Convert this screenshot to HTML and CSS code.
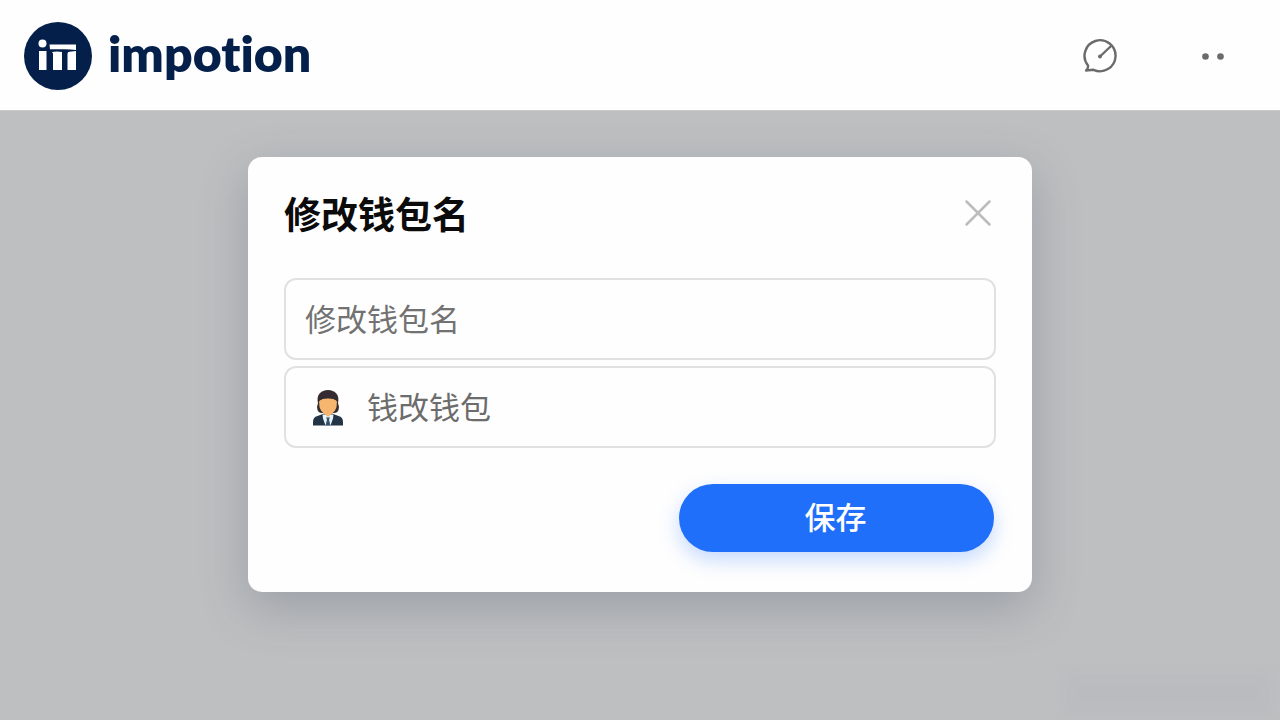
FILE: index.html
```html
<!DOCTYPE html>
<html lang="zh-CN">
<head>
<meta charset="utf-8">
<meta name="viewport" content="width=device-width, initial-scale=1">
<title>impotion</title>
<link rel="stylesheet" href="styles.css">
</head>
<body>
<header class="topbar">
  <a class="brand" href="#">
    <svg class="brand-mark" viewBox="0 0 68 68" aria-hidden="true">
      <circle cx="34" cy="34" r="34" fill="#04204a"/>
      <g fill="#fff">
        <circle cx="18.500" cy="21.500" r="4"/>
        <path d="M15 29h7.500v19H15z"/>
        <path d="M25.500 22.500H52V28q-5-.800-11-.800H26z"/>
        <path d="M28 30q5-1 10 0v18h-9V31.500zM43.500 31.500q0-1.500 2-1.700l6.500-.8v19h-8.500z"/>
      </g>
    </svg>
    <span class="brand-name">impotion</span>
  </a>
  <nav class="actions">
    <button class="icon-button" type="button" aria-label="消息">
      <svg width="36" height="36" viewBox="0 0 36 36" fill="none" stroke="#6b6b6b" stroke-width="2.400" stroke-linecap="round" stroke-linejoin="round" aria-hidden="true">
        <path d="M5 27.500A15.500 15.500 0 1 1 10.500 31.800L3 32.500Q5.500 30.500 5 27.500z"/>
        <path d="M17 18.500 27.500 8.500"/>
        <circle cx="17" cy="18.500" r="1.200" fill="#6b6b6b" stroke-width="1.500"/>
      </svg>
    </button>
    <button class="icon-button" type="button" aria-label="更多">
      <svg width="36" height="36" viewBox="0 0 36 36" fill="#6b6b6b" aria-hidden="true">
        <circle cx="10.500" cy="18.500" r="3.300"/><circle cx="25.500" cy="18.500" r="3.300"/>
      </svg>
    </button>
  </nav>
</header>
<main class="backdrop">
  <form class="dialog" role="dialog" aria-labelledby="dialog-title">
    <div class="dialog-head">
      <h1 class="dialog-title" id="dialog-title">修改钱包名</h1>
      <button class="close" type="button" aria-label="关闭">
        <svg width="28" height="28" viewBox="0 0 28 28" fill="none" stroke="#bcbcbc" stroke-width="2.500" stroke-linecap="round" aria-hidden="true"><path d="m2.500 2.500 23 23M25.500 2.500l-23 23"/></svg>
      </button>
    </div>
    <div class="fields">
      <label class="field">
        <input class="field-input" type="text" placeholder="修改钱包名" aria-label="修改钱包名">
      </label>
      <label class="field field-with-icon">
        <svg class="avatar" viewBox="0 0 32 38" aria-hidden="true">
          <path d="M6 15C4 7 9 2 16 2s12 5 10 13q1.500 3.500.500 7-1 3-4.500 3H10q-3.500 0-4.500-3-1-3.500.500-7z" fill="#352b30"/>
          <path d="M1 37.500V34q0-5 4.500-6L12 25.500h8l6.500 2.500q4.500 1 4.500 6v3.500z" fill="#233447"/>
          <path d="M10.500 26.500h11l-.5 4-2.500 7h-5L11 30.500z" fill="#eaf4fb"/>
          <path d="m14 29.500h4l-1 2 1.500 6h-5l1.500-6z" fill="#36536f"/>
          <path d="M7 12.500q9-4.500 18 0l-.5 6.500q-1.500 5-5.500 7.500l-3 2.500-3-2.500Q9 24 7.500 19z" fill="#f6b66f"/>
          <path d="M6 15Q5.500 5 16 5t10 10q-2-4-6-4.500-4-.5-8 0-4 .5-6 4.500z" fill="#352b30"/>
        </svg>
        <input class="field-input" type="text" value="钱改钱包" aria-label="钱包">
      </label>
    </div>
    <div class="dialog-foot">
      <button class="save" type="submit">保存</button>
    </div>
  </form>
  <div class="haze" aria-hidden="true"></div>
</main>
</body>
</html>
```
FILE: styles.css
```css
*, *::before, *::after { box-sizing: border-box; }

body {
  margin: 0;
  min-height: 100vh;
  display: flex;
  flex-direction: column;
  background: #bdbfc0;
  font-family: "Liberation Sans", "Noto Sans CJK SC", sans-serif;
}

button { padding: 0; border: 0; background: none; font: inherit; cursor: pointer; }
svg { display: block; flex: none; }

.topbar {
  display: flex;
  align-items: center;
  justify-content: space-between;
  padding: 22px 49px 20px 24px;
  background: #fefefe;
  border-bottom: 1px solid #c9cacb;
}

.brand { display: flex; align-items: center; gap: 16px; color: #04204a; text-decoration: none; }
.brand-mark { width: 68px; height: 68px; }
.brand-name {
  padding-bottom: 6px;
  font: 800 50px/60px Lato, sans-serif;
  font-variant-ligatures: none;
}

.actions { display: flex; gap: 76px; }
.icon-button { display: block; }

.backdrop {
  position: relative;
  flex: 1;
  padding: 46px 24px;
  overflow: hidden;
}

.dialog {
  max-width: 784px;
  margin: 0 auto;
  padding: 34px 36px 40px;
  background: #fefefe;
  border-radius: 14px;
  box-shadow: 0 16px 48px rgba(80, 88, 112, .3);
}

.dialog-head { display: flex; align-items: flex-start; justify-content: space-between; }
.dialog-title { margin: 0; font-size: 37px; line-height: 52px; font-weight: 700; color: #0b0b0b; }
.close { margin: 8px 4px 0 0; }

.fields { display: grid; gap: 6px; margin-top: 35px; }
.field {
  display: flex;
  align-items: center;
  gap: 23px;
  padding: 0 19px;
  border: 2px solid #e1e1e3;
  border-radius: 12px;
}
.field-with-icon { padding-left: 26px; }
.avatar { width: 32px; height: 38px; }
.field-input {
  flex: 1;
  min-width: 0;
  height: 78px;
  padding: 0 0 4px;
  border: 0;
  outline: 0;
  background: none;
  color: #6c6c6c;
  font: 400 31px/44px "Noto Sans CJK SC", sans-serif;
}
.field-input::placeholder { color: #727272; opacity: 1; }

.dialog-foot { display: flex; justify-content: flex-end; margin-top: 36px; padding-right: 2px; }
.save {
  width: 315px;
  height: 68px;
  padding: 0 2px 6px 0;
  border-radius: 34px;
  background: #1f6ffb;
  color: #fff;
  font-size: 31px;
  font-weight: 500;
  box-shadow: 0 8px 20px rgba(31, 111, 251, .26);
}

.haze {
  position: absolute;
  right: 8px;
  bottom: 4px;
  width: 208px;
  height: 44px;
  background: #b7b9be;
  opacity: .5;
  filter: blur(6px);
}
```
